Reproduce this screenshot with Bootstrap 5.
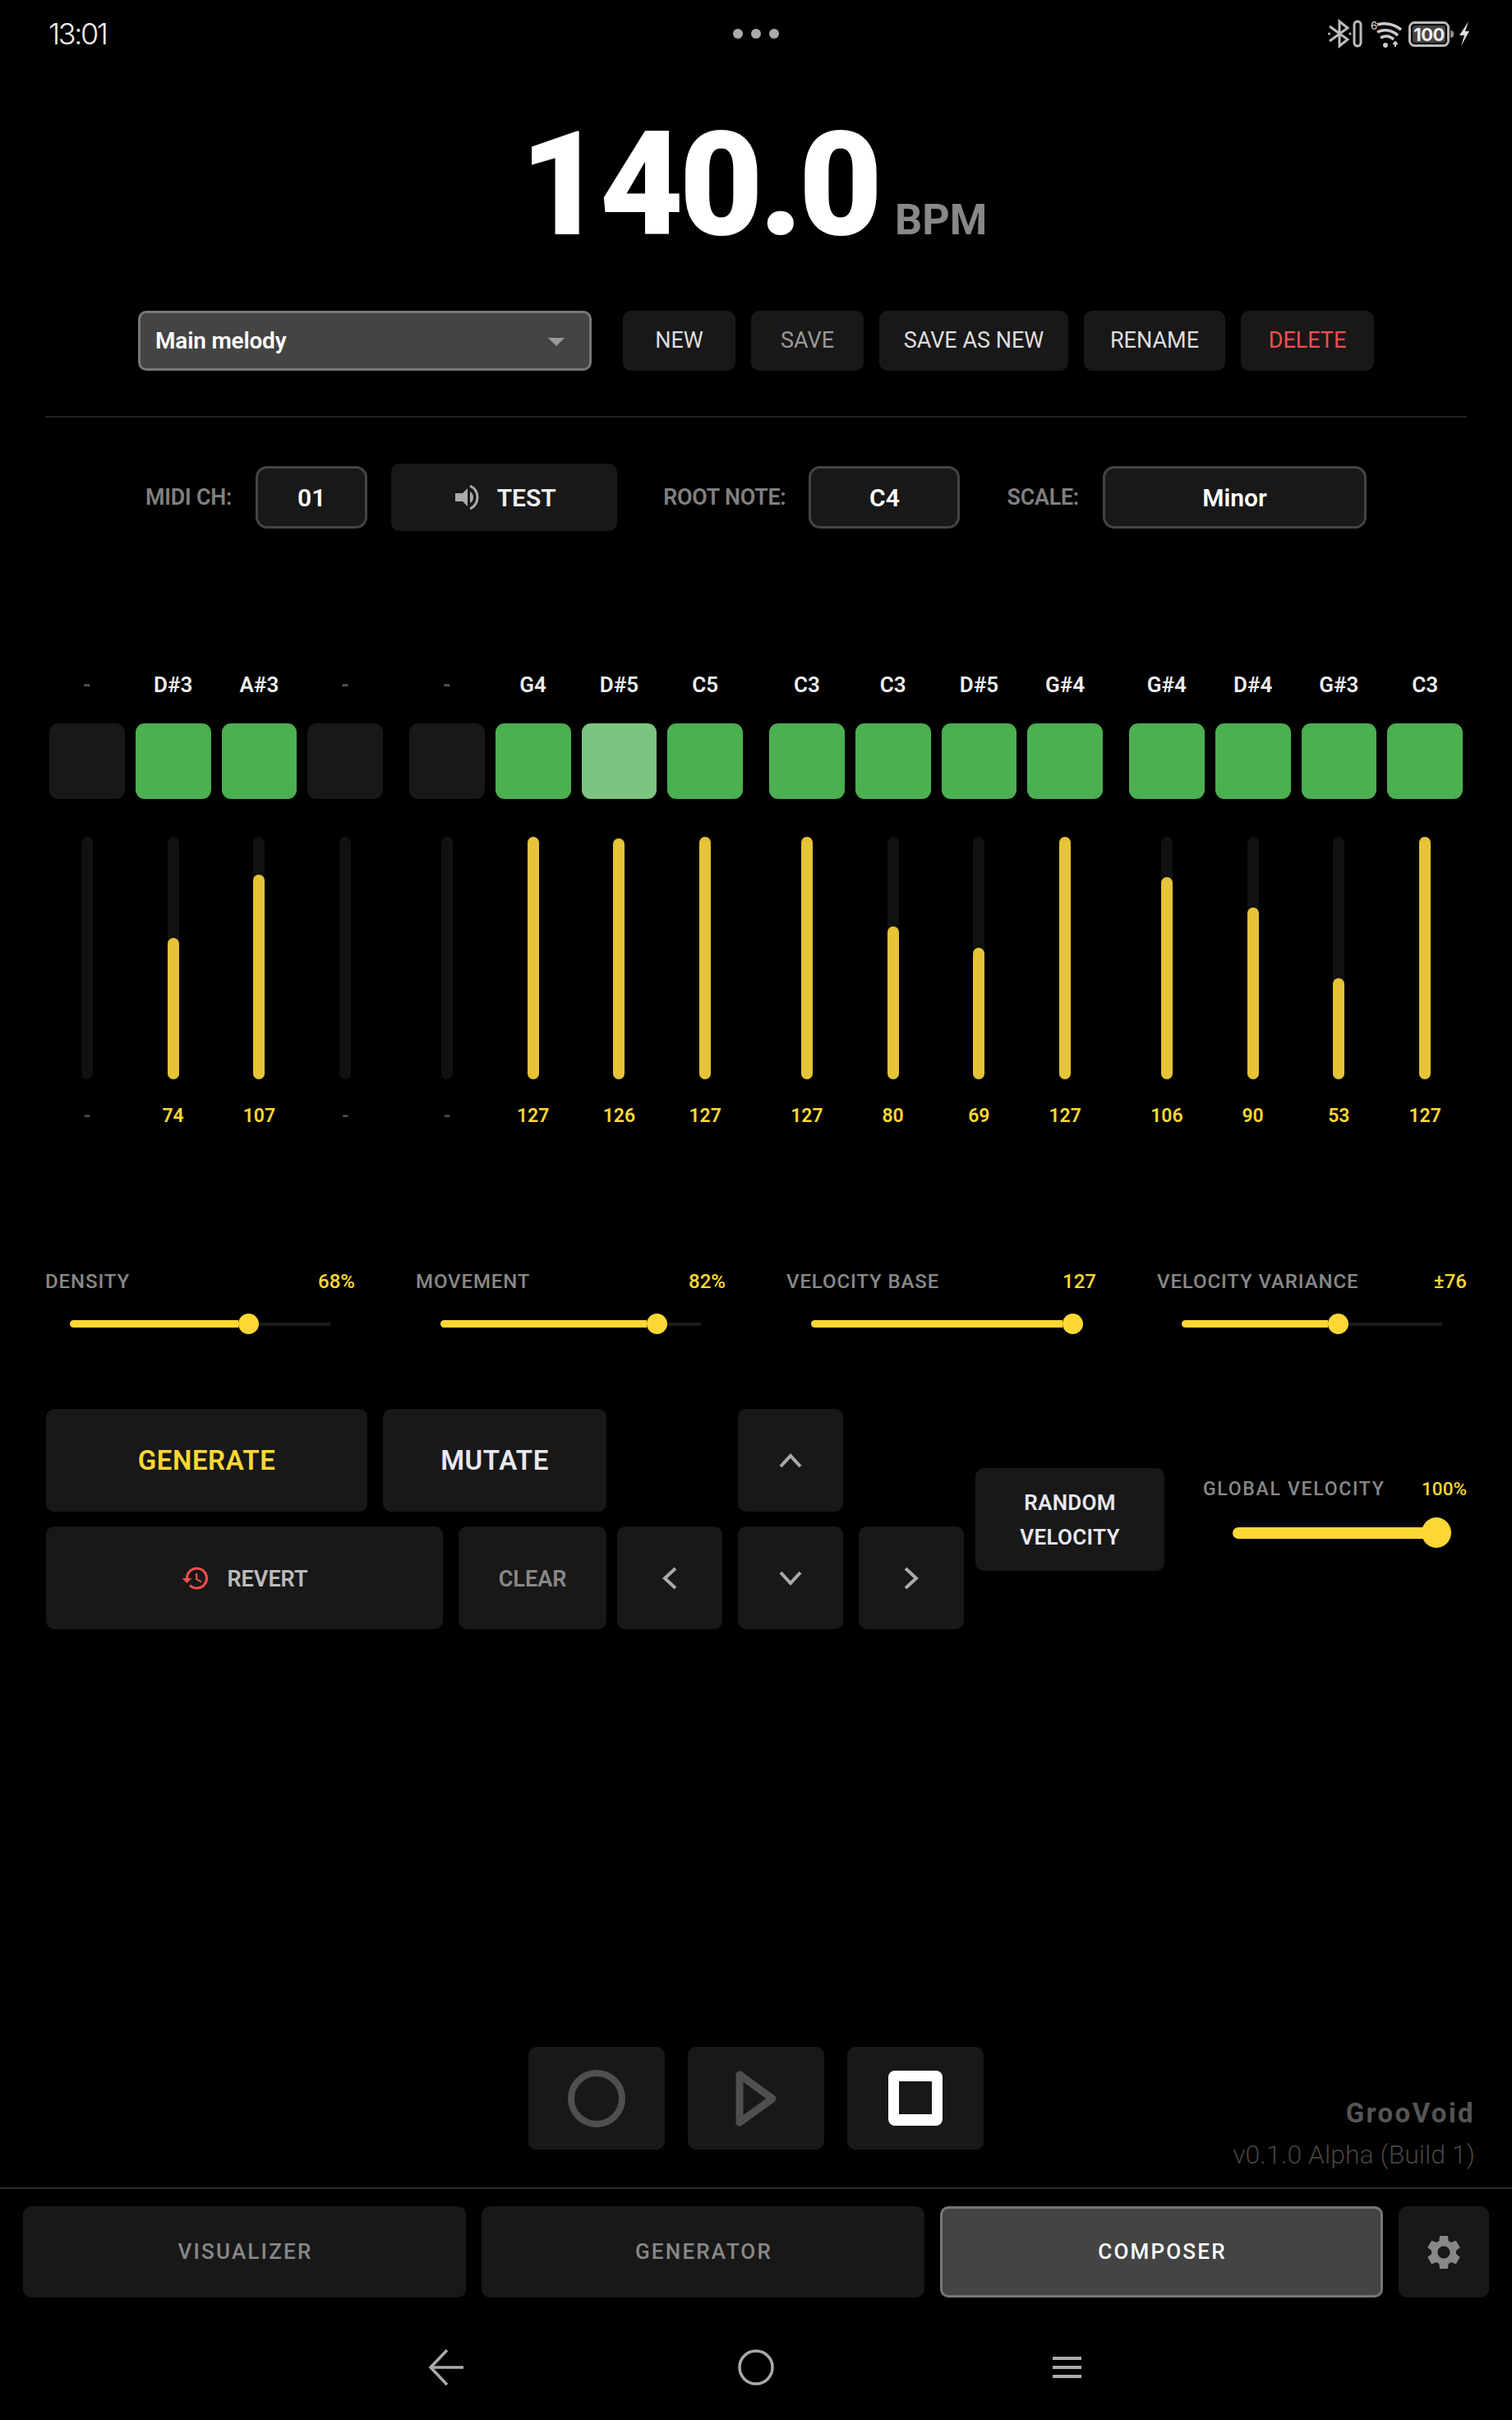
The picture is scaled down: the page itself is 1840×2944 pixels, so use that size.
<!DOCTYPE html>
<html lang="en">
<head>
  <meta charset="UTF-8" />
  <title>GrooVoid - Composer</title>
  <meta name="viewport" content="width=device-width, initial-scale=1" />
  <link href="https://cdn.jsdelivr.net/npm/bootstrap@5.3.0/dist/css/bootstrap.min.css" rel="stylesheet" />
  <style>
    body { background: #000; color: #fff; font-family: Roboto, "Liberation Sans", sans-serif; width: 1840px; height: 2944px; overflow: hidden; }

    /* status bar */
    .status-bar { height: 84px; padding: 0 60px 2px 59px; }
    .status-bar > div { flex: 1 1 0; }
    .status-icons svg { margin-right: -10px; }
    .clock { font-family: Inter, sans-serif; font-weight: 300; font-size: 36px; letter-spacing: -2.4px; color: #eee; line-height: 1; }
    .dots { gap: 10px; }
    .dot { width: 12px; height: 12px; border-radius: 50%; background: #aaa; }
    .batt-text { font-family: Inter, sans-serif; font-size: 22px; font-weight: 700; letter-spacing: -.5px; fill: #eee; }
    .wifi-six { font-family: Inter, sans-serif; font-size: 13px; font-weight: 500; fill: #ccc; }

    /* tempo */
    .tempo { height: 294px; padding-top: 53px; padding-right: 6px; gap: 20px; }
    .tempo-num { font-size: 176px; font-weight: 900; line-height: 1; letter-spacing: -5px; color: #fff; }
    .tempo-unit { font-size: 52px; font-weight: 700; line-height: 1; color: #888; }

    /* buttons */
    .hw-btn { background: #181818; border: 0; border-radius: 10px; padding: 0; color: #ddd; font-family: inherit; }
    .hw-btn:hover, .hw-btn:active { background: #181818; color: #ddd; }

    .preset-row { height: 73px; gap: 19px; }
    .preset-select { width: 552px; height: 73px; margin-right: 19px; padding: 0 30px 0 18px; background: #444; border: 3px solid #777; border-radius: 10px; color: #fff; font-size: 28px; font-weight: 600; letter-spacing: -.2px; }
    .preset-select:hover, .preset-select:active { background: #444; color: #fff; border-color: #777; }
    .preset-select::after { border-top: 10px solid #999; border-left: 10px solid transparent; border-right: 10px solid transparent; border-bottom: 0; margin: 2px 0 0; }
    .preset-btn { height: 73px; font-size: 27px; }
    .w-new { width: 137px; }
    .w-save { width: 137px; color: #999; }
    .w-saveas { width: 230px; }
    .w-rename { width: 172px; }
    .w-delete { width: 162px; color: #f44f4f; }

    .rule { height: 2px; background: #222; margin: 55px 55px 56px 55px; }

    .config-row { height: 82px; }
    .cfg-label { font-size: 26.800px; font-weight: 600; letter-spacing: -.2px; color: #808080; }
    .cfg-box { height: 76px; background: #181818; border: 3px solid #444; border-radius: 14px; font-size: 30px; font-weight: 600; color: #fff; }
    .test-btn { width: 275px; height: 82px; padding-left: 2px; font-size: 30px; font-weight: 600; color: #eee; gap: 22px; margin-right: 56px; }
    .w-midi { width: 136px; margin: 0 29px; }
    .w-root { width: 184px; margin: 0 57px 0 28px; }
    .w-scale { width: 321px; margin-left: 29px; }

    /* step sequencer */
    .seq { margin: 167px 60px 0; gap: 32px; }
    .seq-group { flex: 1 1 0; gap: 13px; }
    .seq-step { flex: 1 1 0; }
    .note-name { height: 40px; line-height: 40px; font-size: 26px; font-weight: 600; color: #eee; }
    .step-pad { height: 92px; margin-top: 27px; border-radius: 11px; background: #181818; }
    .step-pad.on { background: #4caf50; }
    .step-pad.hot { background: #7cc47f; }
    .fader { width: 14px; height: 295px; margin-top: 46px; border-radius: 7px; background: #111; }
    .fader-fill { width: 14px; border-radius: 7px; background: #e6c337; }
    .vel-num { height: 30px; line-height: 30px; margin-top: 30px; font-size: 23px; font-weight: 600; color: #fdd835; }
    .is-empty { color: #555; }

    /* sliders */
    .param-row { margin: 168px 55px 0; gap: 74px; }
    .param { width: 377px; flex: none; }
    .param-label { height: 32px; line-height: 32px; font-size: 24px; font-weight: 500; letter-spacing: .9px; color: #888; }
    .param-value { font-size: 24px; font-weight: 500; color: #fdd835; }
    .slider-line { height: 25px; margin: 21px 30px 0; }
    .slider-fill { height: 9px; border-radius: 5px 0 0 5px; background: #fdd835; flex: none; }
    .slider-thumb { width: 25px; height: 25px; border-radius: 50%; background: #fdd835; flex: none; }
    .slider-rest { height: 4px; background: #1c1c1c; flex: 1 1 0; min-width: 0; }

    /* actions */
    .actions { margin: 91px 55px 0 56px; }
    .act-left { width: 682px; gap: 18px; margin-right: 13px; }
    .act-line { gap: 19px; height: 125px; }
    .big-btn { height: 125px; }
    .w-generate { width: 391px; font-size: 33px; font-weight: 600; color: #fdd835; letter-spacing: .6px; }
    .w-mutate { width: 272px; font-size: 33px; font-weight: 600; color: #e8e8f0; letter-spacing: .6px; }
    .w-revert { width: 483px; padding-top: 3px; font-size: 27px; font-weight: 600; color: #bbb; gap: 20px; }
    .w-revert svg { margin-top: -3px; }
    .w-clear { width: 180px; padding-top: 3px; font-size: 27px; font-weight: 600; color: #888; }
    .dpad { display: grid; grid-template-columns: repeat(3, 128px); grid-template-rows: 125px 125px; gap: 18px 19px; }
    .random-btn { width: 230px; height: 125px; margin-left: 14px; padding-top: 1px; font-size: 26px; font-weight: 600; line-height: 42px; color: #e8e8f0; letter-spacing: .3px; }
    .global { width: 321px; margin-left: 47px; padding-bottom: 18px; }
    .global .param-label { font-size: 23px; letter-spacing: 1.700px; }
    .global .param-value { font-size: 22.500px; }
    .global-line { height: 37px; margin: 18px 0 0 36px; }
    .global-fill { height: 14px; border-radius: 7px 0 0 7px; background: #fdd835; width: 232px; flex: none; }
    .global-thumb { width: 36px; height: 37px; border-radius: 50%; background: #fdd835; margin-left: -2px; flex: none; }

    /* transport */
    .transport-row { margin-top: 508px; height: 171px; }
    .transport-row > .side { flex: 1 1 0; }
    .transport { gap: 28px; }
    .trans-btn { width: 166px; height: 125px; }
    .brand-name { font-size: 33px; font-weight: 700; letter-spacing: 2.400px; color: #555; line-height: 40px; margin: 61px 45px 0 0; }
    .brand-ver { font-size: 32px; font-weight: 300; color: #444; line-height: 40px; margin: 10px 45px 0 0; }

    /* bottom tabs */
    .tab-rule { height: 2px; background: #2a2a2a; }
    .tab-row { padding: 21px 28px 0; gap: 19px; }
    .tab-btn { width: 539px; flex: none; height: 111px; padding-left: 2px; font-size: 26px; font-weight: 500; letter-spacing: 2.200px; color: #888; }
    .tab-btn.current, .tab-btn.current:hover { background: #444; border: 3px solid #777; color: #fff; }
    .gear-btn { width: 110px; height: 111px; flex: none; }

    .sys-nav { height: 149px; padding-top: 21px; }
  </style>
</head>
<body>

<!-- Status bar -->
<div class="status-bar d-flex align-items-center">
  <div class="clock">13:01</div>
  <div class="dots d-flex justify-content-center">
    <span class="dot"></span><span class="dot"></span><span class="dot"></span>
  </div>
  <div class="status-icons d-flex justify-content-end align-items-center">
    <svg width="174" height="36" viewBox="0 0 174 36">
      <g fill="none" stroke="#bbb" stroke-width="3">
        <path d="M2 9 L24 25 L14 33 V3 L24 11 L2 27" />
        <rect x="32" y="3" width="8" height="30" rx="4" />
      </g>
      <circle cx="1.500" cy="18" r="1.500" fill="#bbb" /><circle cx="27" cy="18" r="1.500" fill="#bbb" />
      <text class="wifi-six" x="52" y="13">6</text>
      <g fill="none" stroke="#ccc" stroke-width="3.500">
        <path d="M60 7 Q76 3 89 13" /><path d="M60 16 Q74 10 85 20" /><path d="M64 23 Q73 18 80 25" />
      </g>
      <circle cx="70" cy="32" r="3" fill="#ccc" />
      <path d="M82 34 V29 M79.500 31 L82 28 L84.500 31" stroke="#ccc" stroke-width="2" fill="none" />
      <rect x="99.500" y="4.500" width="47" height="28" rx="6" fill="none" stroke="#bbb" stroke-width="3" />
      <rect x="103" y="8" width="40" height="21" rx="3" fill="#444" />
      <path d="M149 14 a4 4 0 0 1 0 9 z" fill="#888" />
      <text class="batt-text" x="123" y="26.500" text-anchor="middle">100</text>
      <path d="M171 3 L160 20 H166 L162 33 L172 15 H167 Z" fill="#ddd" />
    </svg>
  </div>
</div>

<!-- Tempo -->
<div class="tempo d-flex justify-content-center align-items-baseline">
  <span class="tempo-num">140.0</span>
  <span class="tempo-unit">BPM</span>
</div>

<!-- Preset row -->
<div class="preset-row d-flex justify-content-center">
  <button class="btn preset-select dropdown-toggle d-flex justify-content-between align-items-center">Main melody</button>
  <button class="btn hw-btn preset-btn w-new">NEW</button>
  <button class="btn hw-btn preset-btn w-save">SAVE</button>
  <button class="btn hw-btn preset-btn w-saveas">SAVE AS NEW</button>
  <button class="btn hw-btn preset-btn w-rename">RENAME</button>
  <button class="btn hw-btn preset-btn w-delete">DELETE</button>
</div>

<div class="rule"></div>

<!-- Track config -->
<div class="config-row d-flex justify-content-center align-items-center">
  <span class="cfg-label">MIDI CH:</span>
  <div class="cfg-box w-midi d-flex align-items-center justify-content-center">01</div>
  <button class="btn hw-btn test-btn d-flex align-items-center justify-content-center">
    <svg width="30" height="34" viewBox="0 0 30 34">
      <path d="M1 12 H10 L16 6 V28 L10 22 H1 Z" fill="#aaa" />
      <path d="M19 3 C25 6 28 11 28 17 C28 23 25 28 19 31" fill="none" stroke="#aaa" stroke-width="3" />
      <path d="M19 10 C22 12 23 14 23 17 C23 20 22 22 19 24 Z" fill="#aaa" />
    </svg>
    TEST
  </button>
  <span class="cfg-label">ROOT NOTE:</span>
  <div class="cfg-box w-root d-flex align-items-center justify-content-center">C4</div>
  <span class="cfg-label">SCALE:</span>
  <div class="cfg-box w-scale d-flex align-items-center justify-content-center">Minor</div>
</div>

<!-- Steps -->
<div class="seq d-flex" id="seq"></div>

<!-- Param sliders -->
<div class="param-row d-flex" id="params"></div>

<!-- Actions -->
<div class="actions d-flex align-items-center">
  <div class="act-left d-flex flex-column">
    <div class="act-line d-flex">
      <button class="btn hw-btn big-btn w-generate">GENERATE</button>
      <button class="btn hw-btn big-btn w-mutate">MUTATE</button>
    </div>
    <div class="act-line d-flex">
      <button class="btn hw-btn big-btn w-revert d-flex align-items-center justify-content-center">
        <svg width="36" height="36" viewBox="0 0 24 24"><path fill="#f44f4f" d="M13 3a9 9 0 0 0-9 9H1l3.890 3.890.07.14L9 12H6c0-3.870 3.130-7 7-7s7 3.130 7 7-3.130 7-7 7c-1.930 0-3.680-.79-4.940-2.060l-1.420 1.420A8.954 8.954 0 0 0 13 21a9 9 0 0 0 0-18zm-1 5v5l4.280 2.540.72-1.210-3.500-2.080V8H12z"/></svg>
        REVERT
      </button>
      <button class="btn hw-btn big-btn w-clear">CLEAR</button>
    </div>
  </div>
  <div class="dpad">
    <div></div>
    <button class="btn hw-btn d-flex align-items-center justify-content-center"><svg width="28" height="18" viewBox="0 0 28 18"><path d="M2 16 L14 3 L26 16" fill="none" stroke="#aaa" stroke-width="4"/></svg></button>
    <div></div>
    <button class="btn hw-btn d-flex align-items-center justify-content-center"><svg width="18" height="28" viewBox="0 0 18 28"><path d="M16 2 L3 14 L16 26" fill="none" stroke="#aaa" stroke-width="4"/></svg></button>
    <button class="btn hw-btn d-flex align-items-center justify-content-center"><svg width="28" height="18" viewBox="0 0 28 18"><path d="M2 2 L14 15 L26 2" fill="none" stroke="#aaa" stroke-width="4"/></svg></button>
    <button class="btn hw-btn d-flex align-items-center justify-content-center"><svg width="18" height="28" viewBox="0 0 18 28"><path d="M2 2 L15 14 L2 26" fill="none" stroke="#aaa" stroke-width="4"/></svg></button>
  </div>
  <button class="btn hw-btn random-btn">RANDOM<br>VELOCITY</button>
  <div class="global">
    <div class="d-flex justify-content-between align-items-center">
      <span class="param-label">GLOBAL VELOCITY</span><span class="param-value">100%</span>
    </div>
    <div class="global-line d-flex align-items-center">
      <div class="global-fill"></div><div class="global-thumb"></div>
    </div>
  </div>
</div>

<!-- Transport -->
<div class="transport-row d-flex align-items-start">
  <div class="side"></div>
  <div class="transport d-flex">
    <button class="btn hw-btn trans-btn d-flex align-items-center justify-content-center">
      <svg width="70" height="70" viewBox="0 0 70 70"><circle cx="35" cy="35" r="31" fill="none" stroke="#4f4f4f" stroke-width="8"/></svg>
    </button>
    <button class="btn hw-btn trans-btn d-flex align-items-center justify-content-center">
      <svg width="50" height="68" viewBox="0 0 50 68"><path d="M5 5 L45 34 L5 63 Z" fill="none" stroke="#4f4f4f" stroke-width="9" stroke-linejoin="round"/></svg>
    </button>
    <button class="btn hw-btn trans-btn d-flex align-items-center justify-content-center">
      <svg width="66" height="67" viewBox="0 0 66 67"><path fill="#fff" fill-rule="evenodd" d="M8 0 H58 A8 8 0 0 1 66 8 V59 A8 8 0 0 1 58 67 H8 A8 8 0 0 1 0 59 V8 A8 8 0 0 1 8 0 Z M13 13 V53 H53 V13 Z"/></svg>
    </button>
  </div>
  <div class="side text-end">
    <div class="brand-name">GrooVoid</div>
    <div class="brand-ver">v0.1.0 Alpha (Build 1)</div>
  </div>
</div>

<div class="tab-rule"></div>

<!-- Tabs -->
<div class="tab-row d-flex">
  <button class="btn hw-btn tab-btn">VISUALIZER</button>
  <button class="btn hw-btn tab-btn">GENERATOR</button>
  <button class="btn hw-btn tab-btn current">COMPOSER</button>
  <button class="btn hw-btn gear-btn d-flex align-items-center justify-content-center">
    <svg width="50" height="50" viewBox="0 0 24 24"><path fill="#888" d="M19.140 12.940c.04-.3.06-.61.06-.94 0-.32-.02-.64-.07-.94l2.030-1.580a.49.49 0 0 0 .12-.61l-1.920-3.320a.488.488 0 0 0-.59-.22l-2.390.96c-.5-.38-1.030-.7-1.620-.94l-.36-2.540a.484.484 0 0 0-.48-.41h-3.840c-.24 0-.43.17-.47.41l-.36 2.540c-.59.24-1.130.57-1.620.94l-2.390-.96c-.22-.08-.47 0-.59.22L2.740 8.870c-.12.21-.08.47.12.61l2.030 1.580c-.05.3-.09.63-.09.94s.02.64.07.94l-2.030 1.580a.49.49 0 0 0-.12.61l1.920 3.320c.12.22.37.29.59.22l2.390-.96c.5.38 1.030.7 1.620.94l.36 2.540c.05.24.24.41.48.41h3.840c.24 0 .44-.17.47-.41l.36-2.540c.59-.24 1.130-.56 1.620-.94l2.390.96c.22.08.47 0 .59-.22l1.920-3.320c.12-.22.07-.47-.12-.61l-2.010-1.580zM12 15.600c-1.980 0-3.600-1.620-3.600-3.600s1.620-3.600 3.600-3.600 3.600 1.620 3.600 3.600-1.620 3.600-3.600 3.600z"/></svg>
  </button>
</div>

<!-- Android nav -->
<div class="sys-nav d-flex justify-content-center align-items-center">
  <svg width="796" height="46" viewBox="0 0 796 46">
    <path d="M2 23 H42 M22 2 L2 23 L22 44" fill="none" stroke="#aaa" stroke-width="3.500"/>
    <circle cx="398" cy="23" r="20" fill="none" stroke="#aaa" stroke-width="3.500"/>
    <path d="M759 12 H794 M759 23 H794 M759 34 H794" fill="none" stroke="#aaa" stroke-width="4"/>
  </svg>
</div>

<script>
  const steps = [
    [["-", 0], ["D#3", 74], ["A#3", 107], ["-", 0]],
    [["-", 0], ["G4", 127], ["D#5", 126], ["C5", 127]],
    [["C3", 127], ["C3", 80], ["D#5", 69], ["G#4", 127]],
    [["G#4", 106], ["D#4", 90], ["G#3", 53], ["C3", 127]]
  ];
  const FADER_H = 295;

  const seq = document.getElementById("seq");
  steps.forEach((group, g) => {
    const groupEl = document.createElement("div");
    groupEl.className = "seq-group d-flex";
    group.forEach(([note, vel], i) => {
      const hot = g === 1 && i === 2;
      const empty = vel === 0;
      const step = document.createElement("div");
      step.className = "seq-step d-flex flex-column align-items-center";
      step.innerHTML = `
        <div class="note-name ${empty ? "is-empty" : ""}">${note}</div>
        <div class="step-pad w-100 ${empty ? "" : "on"} ${hot ? "hot" : ""}"></div>
        <div class="fader d-flex align-items-end"><div class="fader-fill"></div></div>
        <div class="vel-num ${empty ? "is-empty" : ""}">${empty ? "-" : vel}</div>
      `;
      step.querySelector(".fader-fill").style.height = (vel / 127 * FADER_H) + "px";
      groupEl.appendChild(step);
    });
    seq.appendChild(groupEl);
  });

  // center = thumb center in px from the start of the track
  const params = [
    ["DENSITY", "68%", 217],
    ["MOVEMENT", "82%", 263],
    ["VELOCITY BASE", "127", 318],
    ["VELOCITY VARIANCE", "±76", 190]
  ];
  const paramsEl = document.getElementById("params");
  params.forEach(([label, value, center]) => {
    const p = document.createElement("div");
    p.className = "param";
    p.innerHTML = `
      <div class="d-flex justify-content-between align-items-center">
        <span class="param-label">${label}</span><span class="param-value">${value}</span>
      </div>
      <div class="slider-line d-flex align-items-center">
        <div class="slider-fill"></div><div class="slider-thumb"></div><div class="slider-rest"></div>
      </div>
    `;
    p.querySelector(".slider-fill").style.width = (center - 12) + "px";
    paramsEl.appendChild(p);
  });
</script>

</body>
</html>
